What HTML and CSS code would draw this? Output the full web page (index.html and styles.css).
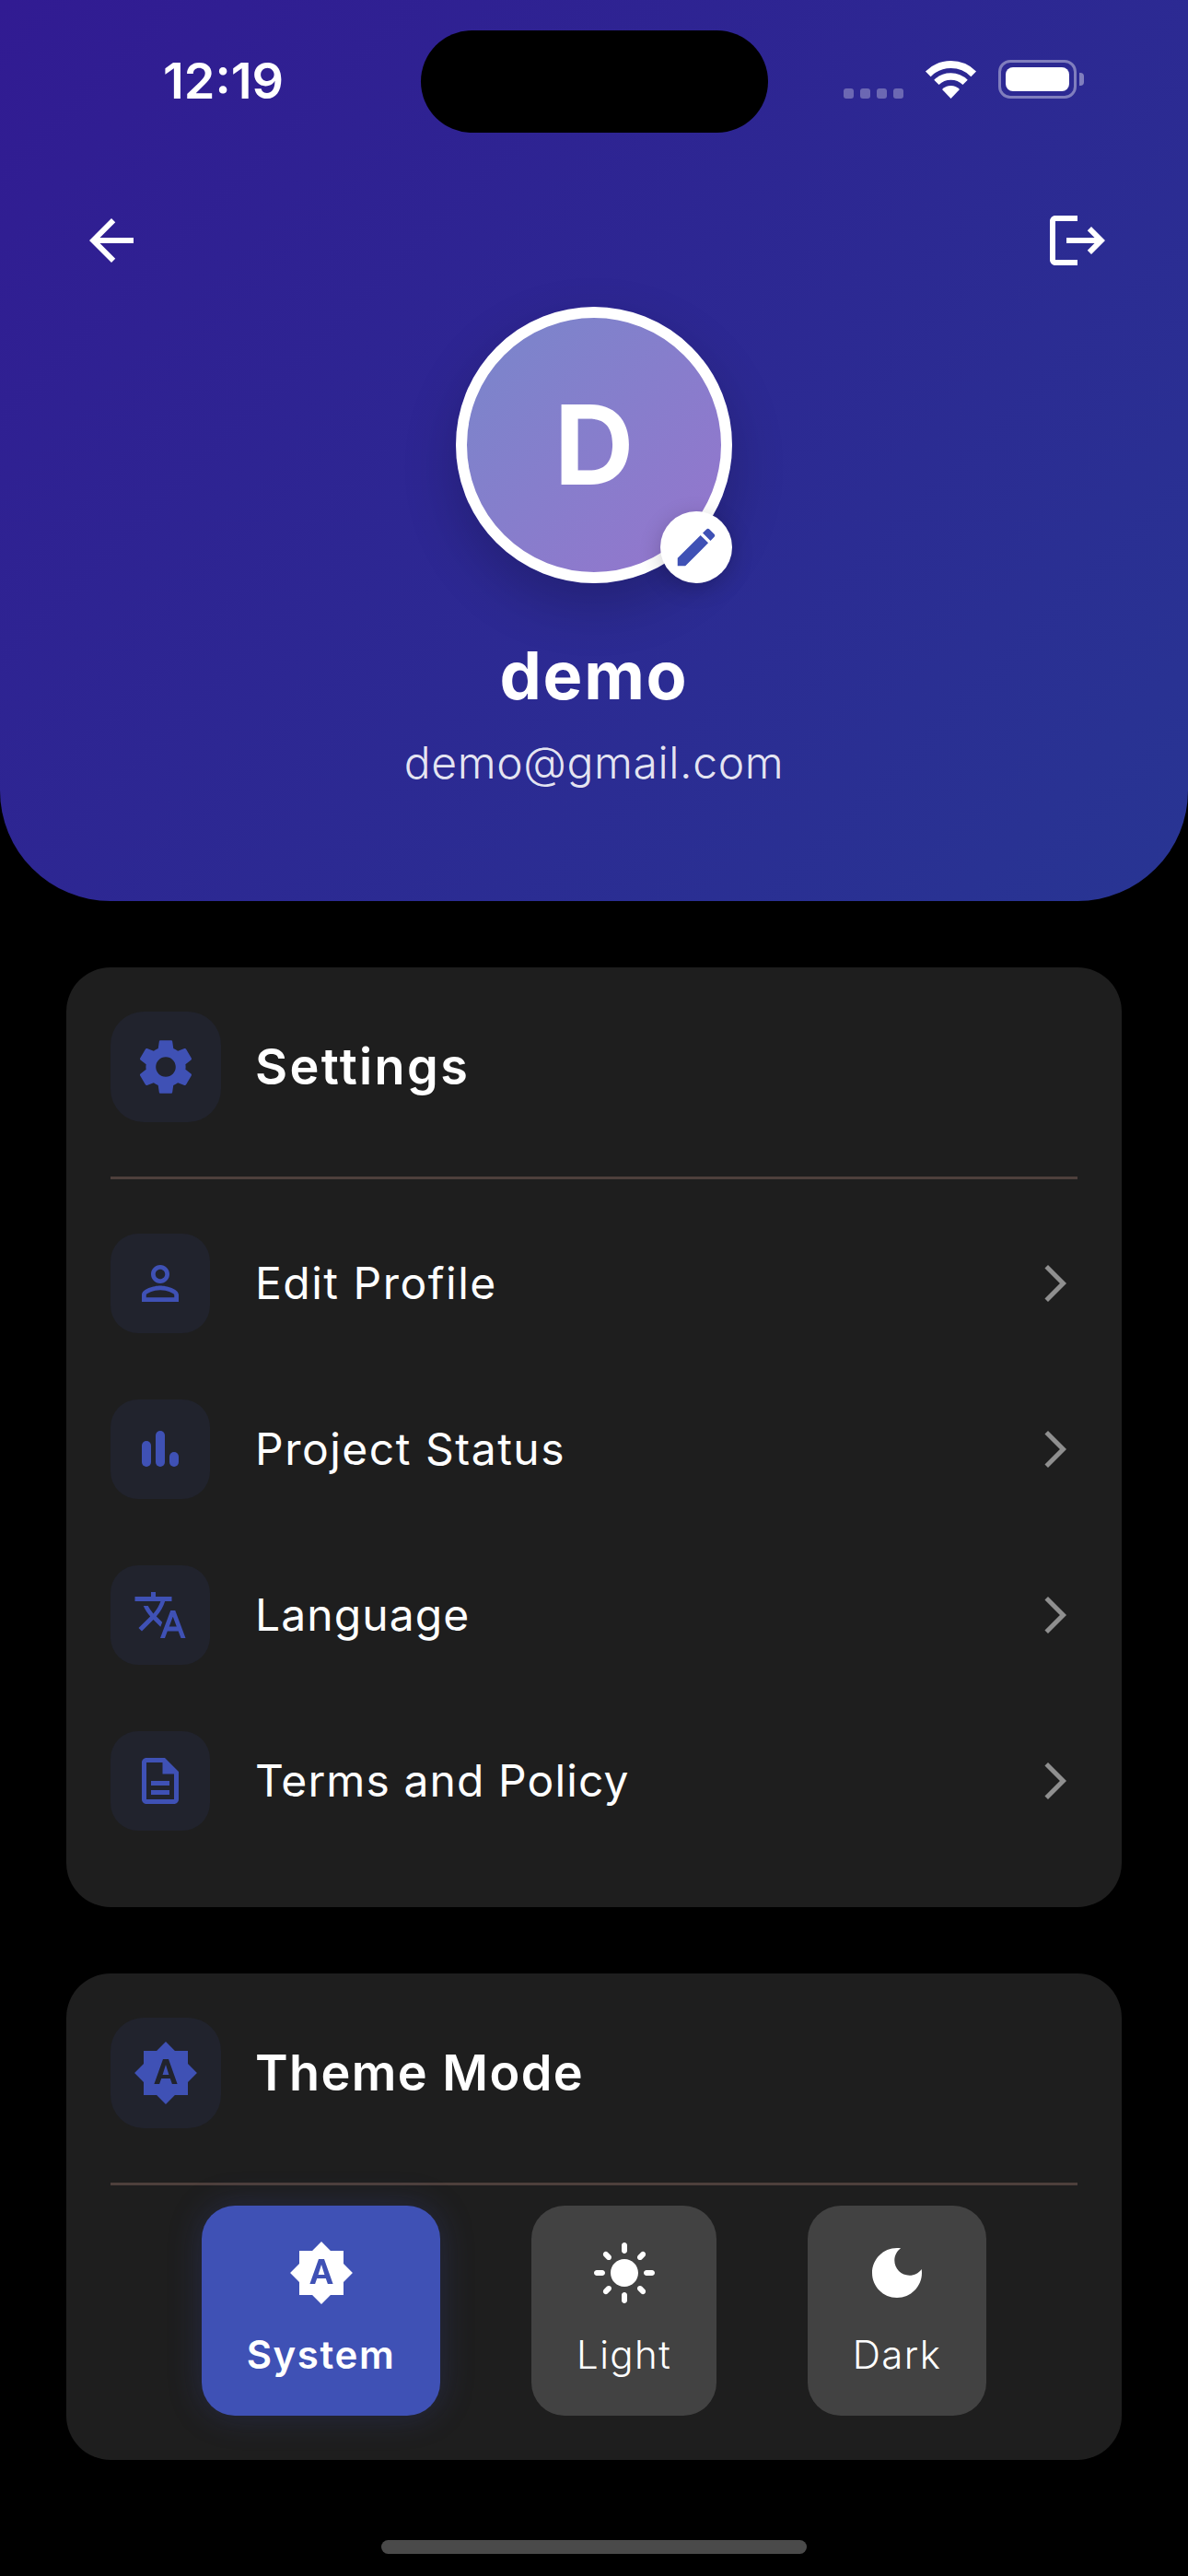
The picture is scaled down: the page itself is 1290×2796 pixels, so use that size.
FILE: index.html
```html
<!DOCTYPE html>
<html lang="en">
<head>
<meta charset="utf-8">
<title>Profile</title>
<link rel="stylesheet" href="styles.css">
</head>
<body>
<div class="screen">
  <header class="hero">
    <div class="status">
      <span class="time">12:19</span>
      <span class="island"></span>
      <span class="signal"><i></i><i></i><i></i><i></i></span>
      <svg class="wifi" viewBox="0 0 57 42" width="57" height="42"><path d="M3.8 15.3A35 35 0 0 1 53.2 15.3" fill="none" stroke="#fff" stroke-width="8"/><path d="M12.9 24.4A22 22 0 0 1 44.1 24.4" fill="none" stroke="#fff" stroke-width="7.5"/><path d="M28.5 42L19 32A13.5 13.5 0 0 1 38 32Z" fill="#fff"/></svg>
      <span class="battery"><span class="battery-fill"></span></span>
      <span class="battery-nub"></span>
    </div>
    <nav class="topnav">
      <svg class="ico72" viewBox="0 0 24 24"><path fill="#fff" d="M20 11H7.83l5.59-5.59L12 4l-8 8 8 8 1.41-1.41L7.83 13H20v-2z"/></svg>
      <svg class="ico72" viewBox="0 0 24 24"><path fill="#fff" d="M17 7l-1.41 1.41L18.17 11H8v2h10.17l-2.58 2.58L17 17l5-5zM4 5h8V3H4c-1.1 0-2 .9-2 2v14c0 1.1.9 2 2 2h8v-2H4V5z"/></svg>
    </nav>
    <div class="avatar">
      <span class="avatar-letter">D</span>
      <span class="edit-badge"><svg class="ico54" viewBox="0 0 24 24"><path fill="#3f51b5" d="M3 17.25V21h3.75L17.81 9.94l-3.75-3.75L3 17.25zM20.71 7.04c.39-.39.39-1.02 0-1.41l-2.34-2.34c-.39-.39-1.02-.39-1.41 0l-1.83 1.83 3.75 3.75 1.83-1.83z"/></svg></span>
    </div>
    <h1 class="name">demo</h1>
    <p class="email">demo@gmail.com</p>
  </header>

  <section class="card card-settings">
    <div class="card-head">
      <span class="icon-box icon-box-lg"><svg class="ico72" viewBox="0 0 24 24"><path class="accent" d="M19.14 12.94c.04-.3.06-.61.06-.94 0-.32-.02-.64-.07-.94l2.03-1.58c.18-.14.23-.41.12-.61l-1.92-3.32c-.12-.22-.37-.29-.59-.22l-2.39.96c-.5-.38-1.03-.7-1.62-.94l-.36-2.54c-.04-.24-.24-.41-.48-.41h-3.84c-.24 0-.43.17-.47.41l-.36 2.54c-.59.24-1.13.57-1.62.94l-2.39-.96c-.22-.08-.47 0-.59.22L2.74 8.87c-.12.21-.08.47.12.61l2.03 1.58c-.05.3-.09.63-.09.94s.02.64.07.94l-2.03 1.58c-.18.14-.23.41-.12.61l1.92 3.32c.12.22.37.29.59.22l2.39-.96c.5.38 1.03.7 1.62.94l.36 2.54c.05.24.24.41.48.41h3.84c.24 0 .44-.17.47-.41l.36-2.54c.59-.24 1.13-.56 1.62-.94l2.39.96c.22.08.47 0 .59-.22l1.92-3.32c.12-.22.07-.47-.12-.61l-2.01-1.58zM12 15.6c-1.98 0-3.6-1.62-3.6-3.6s1.62-3.6 3.6-3.6 3.6 1.62 3.6 3.6-1.62 3.6-3.6 3.6z"/></svg></span>
      <h2 class="card-title card-title-wide">Settings</h2>
    </div>
    <hr class="rule">
    <ul class="menu">
      <li class="menu-item">
        <span class="icon-box"><svg class="ico60" viewBox="0 0 24 24"><path class="accent" d="M12 5.9c1.16 0 2.1.94 2.1 2.1s-.94 2.1-2.1 2.1S9.9 9.16 9.9 8s.94-2.1 2.1-2.1m0 9c2.97 0 6.1 1.46 6.1 2.1v1.1H5.9V17c0-.64 3.13-2.1 6.1-2.1M12 4C9.79 4 8 5.79 8 8s1.79 4 4 4 4-1.79 4-4-1.79-4-4-4zm0 9c-2.67 0-8 1.34-8 4v3h16v-3c0-2.66-5.33-4-8-4z"/></svg></span>
        <span class="menu-label">Edit Profile</span>
        <svg class="chev" viewBox="0 0 24 24"><path d="M6.23 20.23 8 22l10-10L8 2 6.23 3.77 14.46 12z"/></svg>
      </li>
      <li class="menu-item">
        <span class="icon-box"><svg class="ico60" viewBox="0 0 60 60"><g class="accent"><rect x="10" y="21" width="10" height="28" rx="5"/><rect x="25" y="10" width="10" height="39" rx="5"/><rect x="40" y="33" width="10" height="16" rx="5"/></g></svg></span>
        <span class="menu-label">Project Status</span>
        <svg class="chev" viewBox="0 0 24 24"><path d="M6.23 20.23 8 22l10-10L8 2 6.23 3.77 14.46 12z"/></svg>
      </li>
      <li class="menu-item">
        <span class="icon-box"><svg class="ico60" viewBox="0 0 24 24"><path class="accent" d="M12.87 15.07l-2.54-2.51.03-.03c1.74-1.94 2.98-4.17 3.71-6.53H17V4h-7V2H8v2H1v1.99h11.17C11.5 7.92 10.44 9.75 9 11.35 8.07 10.32 7.3 9.19 6.69 8h-2c.73 1.63 1.73 3.17 2.98 4.56l-5.09 5.02L4 19l5-5 3.11 3.11.76-2.04zM18.5 10h-2L12 22h2l1.12-3h4.75L21 22h2l-4.5-12zm-2.62 7l1.62-4.33L19.12 17h-3.24z"/></svg></span>
        <span class="menu-label menu-label-tight">Language</span>
        <svg class="chev" viewBox="0 0 24 24"><path d="M6.23 20.23 8 22l10-10L8 2 6.23 3.77 14.46 12z"/></svg>
      </li>
      <li class="menu-item">
        <span class="icon-box"><svg class="ico60" viewBox="0 0 24 24"><path class="accent" d="M8 16h8v2H8zm0-4h8v2H8zm6-10H6c-1.1 0-2 .9-2 2v16c0 1.1.89 2 1.99 2H18c1.1 0 2-.9 2-2V8l-6-6zm4 18H6V4h7v5h5v11z"/></svg></span>
        <span class="menu-label menu-label-tight">Terms and Policy</span>
        <svg class="chev" viewBox="0 0 24 24"><path d="M6.23 20.23 8 22l10-10L8 2 6.23 3.77 14.46 12z"/></svg>
      </li>
    </ul>
  </section>

  <section class="card card-theme">
    <div class="card-head">
      <span class="icon-box icon-box-lg"><svg class="ico72" viewBox="0 0 24 24"><path class="accent" d="M10.85 12.65h2.3L12 9l-1.15 3.65zM20 8.69V4h-4.69L12 .69 8.69 4H4v4.69L.69 12 4 15.31V20h4.69L12 23.31 15.31 20H20v-4.69L23.31 12 20 8.69zM14.3 16l-.7-2h-3.2l-.7 2H7.8L11 7h2l3.2 9h-1.9z"/></svg></span>
      <h2 class="card-title">Theme Mode</h2>
    </div>
    <hr class="rule">
    <div class="modes">
      <div class="mode mode-active">
        <svg class="ico72" viewBox="0 0 24 24"><path fill="#fff" d="M10.85 12.65h2.3L12 9l-1.15 3.65zM20 8.69V4h-4.69L12 .69 8.69 4H4v4.69L.69 12 4 15.31V20h4.69L12 23.31 15.31 20H20v-4.69L23.31 12 20 8.69zM14.3 16l-.7-2h-3.2l-.7 2H7.8L11 7h2l3.2 9h-1.9z"/></svg>
        <span class="mode-label">System</span>
      </div>
      <div class="mode">
        <svg class="ico72" viewBox="0 0 24 24"><path fill="#fff" d="M12 7c-2.76 0-5 2.24-5 5s2.24 5 5 5 5-2.24 5-5-2.24-5-5-5zM2 13h2c.55 0 1-.45 1-1s-.45-1-1-1H2c-.55 0-1 .45-1 1s.45 1 1 1zm18 0h2c.55 0 1-.45 1-1s-.45-1-1-1h-2c-.55 0-1 .45-1 1s.45 1 1 1zM11 2v2c0 .55.45 1 1 1s1-.45 1-1V2c0-.55-.45-1-1-1s-1 .45-1 1zm0 18v2c0 .55.45 1 1 1s1-.45 1-1v-2c0-.55-.45-1-1-1s-1 .45-1 1zM5.99 4.58c-.39-.39-1.03-.39-1.41 0-.39.39-.39 1.03 0 1.41l1.06 1.06c.39.39 1.03.39 1.41 0s.39-1.03 0-1.41L5.99 4.58zm12.37 12.37c-.39-.39-1.03-.39-1.41 0-.39.39-.39 1.03 0 1.41l1.06 1.06c.39.39 1.03.39 1.41 0 .39-.39.39-1.03 0-1.41l-1.06-1.06zm1.06-10.96c.39-.39.39-1.03 0-1.41-.39-.39-1.03-.39-1.41 0l-1.06 1.06c-.39.39-.39 1.03 0 1.41s1.03.39 1.41 0l1.06-1.06zM7.05 18.36c.39-.39.39-1.03 0-1.41-.39-.39-1.03-.39-1.41 0l-1.06 1.06c-.39.39-.39 1.03 0 1.41s1.03.39 1.41 0l1.06-1.06z"/></svg>
        <span class="mode-label">Light</span>
      </div>
      <div class="mode">
        <svg class="ico72" viewBox="0 0 24 24"><path fill="#fff" d="M12 3c-4.97 0-9 4.03-9 9s4.03 9 9 9 9-4.03 9-9c0-.46-.04-.92-.1-1.36-.98 1.37-2.58 2.26-4.4 2.26-2.98 0-5.4-2.42-5.4-5.4 0-1.81.89-3.42 2.26-4.4-.44-.06-.9-.1-1.36-.1z"/></svg>
        <span class="mode-label">Dark</span>
      </div>
    </div>
  </section>

  <div class="home-bar"></div>
</div>
</body>
</html>
```
FILE: styles.css
```css
* { box-sizing: border-box; }
html, body { margin: 0; padding: 0; background: #000; }
body { font-family: "Inter", "Noto Sans", sans-serif; color: #fff; }
.screen { width: 1290px; height: 2796px; display: flex; flex-direction: column; align-items: center; overflow: hidden; }

.hero {
  width: 100%; height: 978px;
  background: linear-gradient(135deg, #311b92, #283593);
  border-radius: 0 0 120px 120px;
  display: flex; flex-direction: column; align-items: center;
}
.status { width: 100%; height: 144px; padding: 33px 0 0 177px; display: flex; align-items: flex-start; }
.time { width: 280px; margin-top: 23px; font-size: 54px; line-height: 63px; font-weight: 600; }
.island { width: 377px; height: 111px; border-radius: 56px; background: #000; }
.signal { margin: 63px 0 0 82px; display: flex; gap: 7px; }
.signal i { width: 11px; height: 11px; border-radius: 3px; background: rgba(255,255,255,.3); }
.wifi { margin: 32px 0 0 23px; }
.battery { width: 85px; height: 42px; margin: 32px 0 0 23px; padding: 5px 5px; border: 3px solid rgba(255,255,255,.4); border-radius: 13px; display: flex; }
.battery-fill { flex: 1; border-radius: 8px; background: #fff; }
.battery-nub { width: 5px; height: 14px; margin: 46px 0 0 3px; border-radius: 0 4px 4px 0; background: rgba(255,255,255,.4); }

.topnav { width: 100%; height: 72px; margin-top: 81px; padding: 0 84px 0 85px; display: flex; justify-content: space-between; }
.ico72 { width: 72px; height: 72px; display: block; flex: none; }
.ico60 { width: 60px; height: 60px; display: block; flex: none; }
.ico54 { width: 54px; height: 54px; display: block; flex: none; }
.accent { fill: #3f51b5; }

.avatar {
  position: relative; width: 300px; height: 300px; margin-top: 36px; flex: none;
  border: 12px solid #fff; border-radius: 50%;
  background: linear-gradient(135deg, #7986cb, #9575cd);
  box-shadow: 0 24px 60px rgba(0,0,0,.2);
  display: flex; align-items: center; justify-content: center;
}
.avatar-letter { font-size: 120px; line-height: 1; font-weight: 700; }
.edit-badge {
  position: absolute; right: -12px; bottom: -12px; width: 78px; height: 78px; border-radius: 50%;
  background: #fff; box-shadow: 0 6px 24px rgba(0,0,0,.2);
  display: flex; align-items: center; justify-content: center;
}
.name { margin: 56px 0 0; font-size: 72px; line-height: 87px; font-weight: 700; letter-spacing: 1.7px; }
.email { margin: 23px 0 0; font-size: 48px; line-height: 58px; font-weight: 300; letter-spacing: .6px; color: rgba(255,255,255,.9); }

.card { width: 1146px; flex: none; background: #1e1e1e; border-radius: 48px; padding: 48px; }
.card-settings { margin-top: 72px; height: 1020px; }
.card-theme { margin-top: 72px; height: 528px; padding-bottom: 0; }
.card-head { display: flex; align-items: center; gap: 37px; }
.icon-box { width: 108px; height: 108px; border-radius: 30px; background: #21232d; display: flex; align-items: center; justify-content: center; flex: none; }
.icon-box-lg { width: 120px; height: 120px; border-radius: 36px; }
.card-title { margin: 0; font-size: 54px; line-height: 66px; font-weight: 600; letter-spacing: 1.4px; }
.card-title-wide { letter-spacing: 2.4px; }
.rule { height: 3px; margin: 59px 0 0; border: 0; background: #4e403c; }
.menu { list-style: none; margin: 59px 0 0; padding: 0; display: flex; flex-direction: column; gap: 72px; }
.menu-item { display: flex; align-items: center; height: 108px; gap: 49px; }
.menu-label { flex: 1; font-size: 48px; line-height: 58px; letter-spacing: 1.5px; }
.menu-label-tight { letter-spacing: 1.1px; }
.chev { width: 48px; height: 48px; fill: #8f8f8f; flex: none; }

.modes { display: flex; justify-content: space-evenly; margin-top: 22px; }
.mode { height: 228px; padding: 37px 49px 0; border-radius: 36px; background: #424242; display: flex; flex-direction: column; align-items: center; }
.mode-active { background: #3f51b5; box-shadow: 0 0 36px rgba(63,81,181,.25); }
.mode-label { margin-top: 27px; font-size: 42px; line-height: 51px; font-weight: 300; letter-spacing: 1.4px; }
.mode-active .mode-label { font-weight: 600; letter-spacing: 1.6px; }

.home-bar { width: 462px; height: 15px; margin-top: 87px; border-radius: 8px; background: #4a4a4a; flex: none; }
```
